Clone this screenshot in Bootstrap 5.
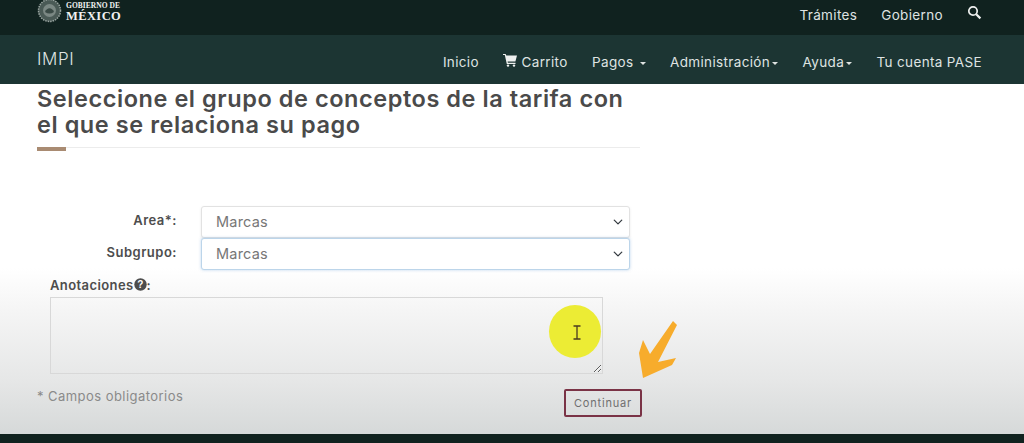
<!DOCTYPE html>
<html lang="es">
<head>
  <meta charset="UTF-8" />
  <meta name="viewport" content="width=device-width, initial-scale=1.0" />
  <title>IMPI - Pagos</title>
  <link href="https://cdn.jsdelivr.net/npm/bootstrap@5.3.0/dist/css/bootstrap.min.css" rel="stylesheet">
  <style>
    html, body { height: 443px; overflow: hidden; }
    body {
      font-family: Inter, "Open Sans", sans-serif;
      background: linear-gradient(#fff 0, #fff 268px, #f5f5f5 310px, #e6e7e7 380px, #d6d9d9 434px);
      position: relative;
    }
    .gob-bar { height: 35px; background: #10221f; padding: 0 42px 0 37px; }
    .gob-logo { color: #f2f2f2; font-family: "Liberation Serif", serif; font-weight: 700; line-height: 1; margin-top: -11px; }
    .gob-logo .l1 { font-size: 7.5px; letter-spacing: .05px; }
    .gob-logo .l2 { font-size: 12.5px; letter-spacing: .4px; margin-top: 1px; }
    .gob-link { color: #dfe3e2; font-size: 13.5px; letter-spacing: .35px; text-decoration: none; margin-top: -4px; }
    .impi-nav { height: 49px; background: #1c3533; padding: 0 42px 0 37px; }
    .impi-brand { color: #dfe3e2; font-size: 17px; font-weight: 300; letter-spacing: .6px; margin-top: 1px; }
    .impi-menu { gap: 24.4px; }
    .impi-link { color: #dfe3e2; font-size: 13.5px; letter-spacing: .35px; text-decoration: none; white-space: nowrap; margin-top: 5px; }
    .caret-mini { display: inline-block; border-top: 3px solid #dfe3e2; border-left: 3px solid transparent; border-right: 3px solid transparent; vertical-align: middle; margin-left: 2px; }
    .white-line { height: 1px; background: #fff; }
    .pago-wrap { width: 640px; padding-left: 37px; }
    .pago-title { color: #4a4a4a; font-size: 23.5px; line-height: 26px; font-weight: 600; margin: 0; padding-top: 1px; letter-spacing: .56px; }
    .title-rule { height: 4px; margin-top: 9px; background: linear-gradient(#ececec, #ececec) no-repeat 0 0 / 100% 1px; }
    .title-rule i { display: block; width: 29px; height: 4px; background: #a98b72; }
    .pago-form { margin-top: 55px; }
    .campo-row { height: 32px; }
    .campo-label { width: 140px; text-align: right; color: #4d4d4d; font-size: 13px; font-weight: 600; letter-spacing: .5px; margin: 0 24px 0 0; padding-bottom: 3px; }
    .campo-select { width: 429px; height: 32px; font-size: 14.5px; color: #777; letter-spacing: .2px; padding: 0 14px; border-radius: 3px; border-color: #e2e2e2; box-shadow: 0 1px 3px rgba(0,0,0,.08); background-position: right 5px center; background-size: 12px 10px; }
    .campo-select.activo { border-color: #bcd5ea; box-shadow: 0 0 3px rgba(120,170,220,.5); }
    .anot-wrap { margin: 7px 0 0 13px; width: 553px; }
    .anot-label { color: #4d4d4d; font-size: 13px; font-weight: 600; letter-spacing: .4px; line-height: 16px; margin-bottom: 4px; }
    .anot-label svg { vertical-align: -1px; }
    .anot-text { display: block; width: 553px; height: 77px; background: transparent; border: 1px solid #d8d8d8; border-radius: 0; }
    .pie-form { margin-top: 15px; width: 605px; }
    .nota-obl { color: #8a8a8a; font-size: 13px; letter-spacing: .45px; margin-top: -12px; }
    .btn-seguir { width: 78px; height: 28px; padding: 0; font-size: 11px; letter-spacing: .8px; color: #6f6f6f; background: transparent; border: 2px solid #7a3346; border-radius: 2px; }
    .pie-oscuro { position: absolute; left: 0; right: 0; top: 434px; height: 9px; background: #10221f; }
    .resalte { position: absolute; left: 549px; top: 305px; width: 52px; height: 53px; border-radius: 50%; background: #ecec34; }
    .cursor-i { position: absolute; left: 572px; top: 325px; }
    .flecha { position: absolute; left: 638px; top: 320px; }
  </style>
</head>
<body>
  <div class="gob-bar d-flex align-items-center justify-content-between">
    <div class="d-flex align-items-center gob-marca">
      <svg width="25" height="25" viewBox="0 0 25 25" style="margin:-15px 4px 0 0">
        <circle cx="12.5" cy="12.5" r="11" fill="#4a5a56" stroke="#9aa5a1" stroke-width="1.5" stroke-dasharray="1.5 1"/>
        <circle cx="12.5" cy="12.5" r="6.5" fill="#7b8884"/>
        <path d="M8 14c2-5 7-5 9 0-3 2-6 2-9 0z" fill="#3a4a46"/>
      </svg>
      <div class="gob-logo">
        <div class="l1">GOBIERNO DE</div>
        <div class="l2">MÉXICO</div>
      </div>
    </div>
    <div class="d-flex align-items-center gap-4">
      <a href="#" class="gob-link">Trámites</a>
      <a href="#" class="gob-link">Gobierno</a>
      <svg width="15" height="15" viewBox="0 0 15 15" style="margin-top:-10px" fill="none" stroke="#eef0ef">
        <circle cx="6" cy="6" r="4.2" stroke-width="1.7"/>
        <path d="M9.2 9.2 13.4 13.4" stroke-width="2.2"/>
      </svg>
    </div>
  </div>

  <nav class="impi-nav d-flex align-items-center justify-content-between">
    <span class="impi-brand">IMPI</span>
    <div class="d-flex align-items-center impi-menu">
      <a href="#" class="impi-link">Inicio</a>
      <a href="#" class="impi-link">
        <svg width="14" height="13" viewBox="0 0 14 13" fill="#eef0ef" style="vertical-align:0">
          <path d="M0 0h2.6l.7 1.6H14l-1.6 6H4.6l.3 1.2h7.6v1.1H3.8L1.8 1.1H0z"/>
          <circle cx="5" cy="11.6" r="1.2"/><circle cx="11" cy="11.6" r="1.2"/>
        </svg>
        Carrito
      </a>
      <a href="#" class="impi-link">Pagos <span class="caret-mini"></span></a>
      <a href="#" class="impi-link">Administración<span class="caret-mini"></span></a>
      <a href="#" class="impi-link">Ayuda<span class="caret-mini"></span></a>
      <a href="#" class="impi-link">Tu cuenta PASE</a>
    </div>
  </nav>
  <div class="white-line"></div>

  <main class="pago-wrap">
    <h1 class="pago-title">Seleccione el grupo de conceptos de la tarifa con el que se relaciona su pago</h1>
    <div class="title-rule"><i></i></div>

    <form class="pago-form">
      <div class="campo-row d-flex align-items-center">
        <label class="campo-label">Area*:</label>
        <select class="form-select campo-select"><option>Marcas</option></select>
      </div>
      <div class="campo-row d-flex align-items-center">
        <label class="campo-label">Subgrupo:</label>
        <select class="form-select campo-select activo"><option>Marcas</option></select>
      </div>
      <div class="anot-wrap">
        <div class="anot-label">Anotaciones<svg width="13" height="13" viewBox="0 0 13 13"><circle cx="6.5" cy="6.5" r="6.2" fill="#4d4d4d"/><text x="6.5" y="10" text-anchor="middle" font-size="10" font-weight="700" font-family="Liberation Sans, sans-serif" fill="#fff">?</text></svg>:</div>
        <textarea class="anot-text"></textarea>
      </div>
      <div class="pie-form d-flex justify-content-between align-items-center">
        <span class="nota-obl">* Campos obligatorios</span>
        <button type="button" class="btn btn-seguir">Continuar</button>
      </div>
    </form>
  </main>

  <div class="pie-oscuro"></div>

  <div class="resalte"></div>
  <svg class="cursor-i" width="10" height="15" viewBox="0 0 10 15" fill="none" stroke="#4a3a20" stroke-width="1.3">
    <path d="M1.5 1h7M1.5 14h7M5 1v13"/>
  </svg>
  <svg class="flecha" width="42" height="60" viewBox="0 0 42 60" fill="#f7ac2c">
    <path d="M35 1 39 5 20 42 38 38 34 45 5 58 1 33 5 20 12 34z"/>
  </svg>
</body>
</html>
